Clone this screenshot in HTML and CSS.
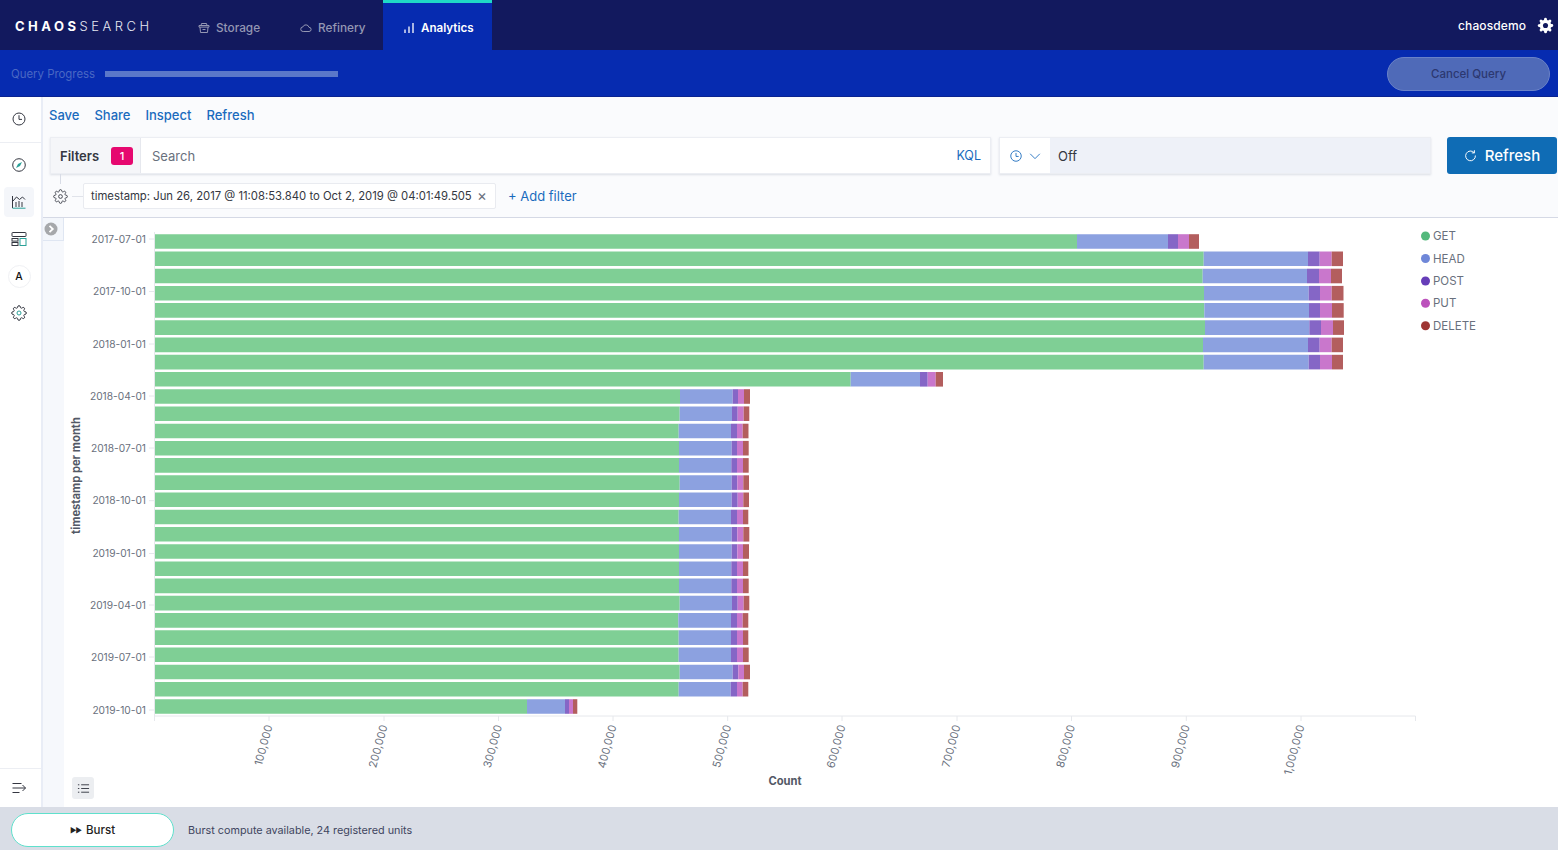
FILE: index.html
```html
<!DOCTYPE html>
<html lang="en">
<head>
<meta charset="utf-8">
<title>CHAOSSEARCH Analytics</title>
<link rel="stylesheet" href="styles.css">
</head>
<body>
<svg class="defs" width="0" height="0" aria-hidden="true">
  <symbol id="gear" viewBox="0 0 24 24"><path d="M19.4 15a1.65 1.65 0 0 0 .33 1.82l.06.06a2 2 0 0 1 0 2.83 2 2 0 0 1-2.83 0l-.06-.06a1.65 1.65 0 0 0-1.82-.33 1.65 1.65 0 0 0-1 1.51V21a2 2 0 0 1-2 2 2 2 0 0 1-2-2v-.09A1.65 1.65 0 0 0 9 19.4a1.65 1.65 0 0 0-1.82.33l-.06.06a2 2 0 0 1-2.83 0 2 2 0 0 1 0-2.83l.06-.06a1.65 1.65 0 0 0 .33-1.82 1.65 1.65 0 0 0-1.51-1H3a2 2 0 0 1-2-2 2 2 0 0 1 2-2h.09A1.65 1.65 0 0 0 4.6 9a1.65 1.65 0 0 0-.33-1.82l-.06-.06a2 2 0 0 1 0-2.83 2 2 0 0 1 2.83 0l.06.06a1.65 1.65 0 0 0 1.82.33H9a1.65 1.65 0 0 0 1-1.51V3a2 2 0 0 1 2-2 2 2 0 0 1 2 2v.09a1.65 1.65 0 0 0 1 1.51 1.65 1.65 0 0 0 1.82-.33l.06-.06a2 2 0 0 1 2.83 0 2 2 0 0 1 0 2.83l-.06.06a1.65 1.65 0 0 0-.33 1.82V9a1.65 1.65 0 0 0 1.51 1H21a2 2 0 0 1 2 2 2 2 0 0 1-2 2h-.09a1.65 1.65 0 0 0-1.51 1z"/></symbol>
</svg>

<header class="topbar">
  <div class="logo"><b>CHAOS</b>SEARCH</div>
  <nav class="nav">
    <a class="nav-item nav-storage">
      <svg class="nav-icon" viewBox="0 0 12 12"><path d="M1 3.5h10v1.6H1zM2 5.1l.5 5.4h7l.5-5.4M3 3.5l.5-2h5l.5 2M4.5 7.5h3"/></svg>
      Storage
    </a>
    <a class="nav-item nav-refinery">
      <svg class="nav-icon" viewBox="0 0 12 12"><path d="M3.2 9.5a2.3 2.3 0 0 1-.3-4.6 3.2 3.2 0 0 1 6.1.4 2.1 2.1 0 0 1 0 4.2z"/></svg>
      Refinery
    </a>
    <a class="nav-item nav-active">
      <svg class="nav-icon" viewBox="0 0 12 12"><path d="M2 11V7.5M6 11V4.5M10 11V1"/></svg>
      Analytics
    </a>
  </nav>
  <div class="user">
    <span>chaosdemo</span>
    <svg class="user-gear" viewBox="0 0 24 24"><use href="#gear"/><circle cx="12" cy="12" r="3.6"/></svg>
  </div>
</header>

<section class="progressbar">
  <span class="progress-label">Query Progress</span>
  <span class="progress-track"></span>
  <button class="cancel">Cancel Query</button>
</section>

<main class="main">
  <aside class="sidebar">
    <div class="side-top">
      <svg class="side-icon" viewBox="0 0 16 16"><circle cx="8" cy="8" r="6"/><path d="M8 4.2V8.4H11"/></svg>
    </div>
    <div class="side-list">
      <span class="side-slot">
        <svg class="side-icon" viewBox="0 0 16 16"><circle cx="8" cy="8" r="6.3"/><path class="teal-fill" d="M11 5 9 9 5 11 7 7z"/></svg>
      </span>
      <span class="side-slot side-active">
        <svg class="side-icon" viewBox="0 0 16 16"><path d="M1.5 2v12"/><path class="teal" d="M1.5 14.2h13"/><path d="M2 7l3.5-4 3 2.5L11.5 3 14 5.5M5 8v5M8 7v6M11 8v5"/></svg>
      </span>
      <span class="side-slot">
        <svg class="side-icon" viewBox="0 0 16 16"><rect x="1" y="1.5" width="14" height="4" rx=".6"/><rect x="1" y="7.5" width="6" height="2.6"/><rect x="1" y="11.5" width="6" height="3"/><rect class="teal" x="9" y="7.5" width="6" height="7"/></svg>
      </span>
      <span class="side-slot"><span class="side-a">A</span></span>
      <span class="side-slot">
        <svg class="side-icon side-gear" viewBox="0 0 24 24"><use href="#gear"/><circle class="teal" cx="12" cy="12" r="3"/></svg>
      </span>
    </div>
    <div class="side-bottom">
      <svg class="side-icon" viewBox="0 0 16 16"><path d="M1.5 3.5h9M1.5 8h13M1.5 12.5h7M11.5 5l3 3-3 3"/></svg>
    </div>
  </aside>

  <div class="content">
    <div class="links">
      <a>Save</a><a>Share</a><a>Inspect</a><a>Refresh</a>
    </div>

    <div class="querybar">
      <div class="search">
        <div class="filters-btn">Filters <span class="badge">1</span></div>
        <div class="search-field">Search</div>
        <a class="kql">KQL</a>
      </div>
      <div class="timebox">
        <div class="time-btn">
          <svg class="time-icon" viewBox="0 0 16 16"><circle cx="8" cy="8" r="6"/><path d="M8 4.5V8.5H11"/></svg>
          <svg class="time-icon" viewBox="0 0 16 16"><path d="M2.5 5.5 8 11l5.5-5.5"/></svg>
        </div>
        <div class="time-value">Off</div>
      </div>
      <button class="refresh">
        <svg class="refresh-icon" viewBox="0 0 16 16"><path d="M12.6 4.6A6 6 0 1 0 14 8M12.8 1.5v3.3H9.6"/></svg>
        Refresh
      </button>
    </div>

    <div class="filterrow">
      <span class="filter-gear">
        <svg class="filter-gear-icon" viewBox="0 0 24 24"><use href="#gear"/><circle cx="12" cy="12" r="3"/></svg>
      </span>
      <span class="filter-dash"></span>
      <span class="pill">timestamp: Jun 26, 2017 @ 11:08:53.840 to Oct 2, 2019 @ 04:01:49.505 <i class="pill-x">×</i></span>
      <a class="addfilter">+ Add filter</a>
    </div>

    <div class="chartwrap">
      <div class="strip">
        <span class="toggle-box">
          <svg class="toggle" viewBox="0 0 14 14"><circle cx="7" cy="7" r="6.5"/><path d="M5.5 3.8 8.8 7l-3.3 3.2"/></svg>
        </span>
      </div>
      <div class="chart">
        <svg class="plot" viewBox="64 218 1494 589">
          <g class="bar" transform="translate(0 241.5)"><line class="g" x1="154.5" x2="1077"/><line class="h" x1="1077" x2="1168"/><line class="p" x1="1168" x2="1178"/><line class="u" x1="1178" x2="1189"/><line class="d" x1="1189" x2="1199"/></g>
          <g class="bar" transform="translate(0 258.8)"><line class="g" x1="154.5" x2="1203.7"/><line class="h" x1="1203.7" x2="1308"/><line class="p" x1="1308" x2="1319.7"/><line class="u" x1="1319.7" x2="1331.7"/><line class="d" x1="1331.7" x2="1343"/></g>
          <g class="bar" transform="translate(0 276)"><line class="g" x1="154.5" x2="1202.7"/><line class="h" x1="1202.7" x2="1307"/><line class="p" x1="1307" x2="1319"/><line class="u" x1="1319" x2="1331"/><line class="d" x1="1331" x2="1342"/></g>
          <g class="bar" transform="translate(0 293.2)"><line class="g" x1="154.5" x2="1204"/><line class="h" x1="1204" x2="1308.7"/><line class="p" x1="1308.7" x2="1320"/><line class="u" x1="1320" x2="1331.7"/><line class="d" x1="1331.7" x2="1343.5"/></g>
          <g class="bar" transform="translate(0 310.4)"><line class="g" x1="154.5" x2="1204.3"/><line class="h" x1="1204.3" x2="1309"/><line class="p" x1="1309" x2="1320"/><line class="u" x1="1320" x2="1332"/><line class="d" x1="1332" x2="1343.7"/></g>
          <g class="bar" transform="translate(0 327.6)"><line class="g" x1="154.5" x2="1205"/><line class="h" x1="1205" x2="1309.3"/><line class="p" x1="1309.3" x2="1321"/><line class="u" x1="1321" x2="1333"/><line class="d" x1="1333" x2="1344"/></g>
          <g class="bar" transform="translate(0 344.9)"><line class="g" x1="154.5" x2="1203"/><line class="h" x1="1203" x2="1308"/><line class="p" x1="1308" x2="1319.7"/><line class="u" x1="1319.7" x2="1331.7"/><line class="d" x1="1331.7" x2="1343"/></g>
          <g class="bar" transform="translate(0 362.1)"><line class="g" x1="154.5" x2="1203.7"/><line class="h" x1="1203.7" x2="1308.7"/><line class="p" x1="1308.7" x2="1320"/><line class="u" x1="1320" x2="1332"/><line class="d" x1="1332" x2="1343"/></g>
          <g class="bar" transform="translate(0 379.3)"><line class="g" x1="154.5" x2="850.7"/><line class="h" x1="850.7" x2="920"/><line class="p" x1="920" x2="927.7"/><line class="u" x1="927.7" x2="935.7"/><line class="d" x1="935.7" x2="943"/></g>
          <g class="bar" transform="translate(0 396.5)"><line class="g" x1="154.5" x2="680"/><line class="h" x1="680" x2="732.7"/><line class="p" x1="732.7" x2="738"/><line class="u" x1="738" x2="744"/><line class="d" x1="744" x2="750"/></g>
          <g class="bar" transform="translate(0 413.7)"><line class="g" x1="154.5" x2="679.7"/><line class="h" x1="679.7" x2="732"/><line class="p" x1="732" x2="737.7"/><line class="u" x1="737.7" x2="743.7"/><line class="d" x1="743.7" x2="749.3"/></g>
          <g class="bar" transform="translate(0 431)"><line class="g" x1="154.5" x2="678.7"/><line class="h" x1="678.7" x2="731"/><line class="p" x1="731" x2="737"/><line class="u" x1="737" x2="742.7"/><line class="d" x1="742.7" x2="748.5"/></g>
          <g class="bar" transform="translate(0 448.2)"><line class="g" x1="154.5" x2="679"/><line class="h" x1="679" x2="731.7"/><line class="p" x1="731.7" x2="737"/><line class="u" x1="737" x2="743"/><line class="d" x1="743" x2="748.7"/></g>
          <g class="bar" transform="translate(0 465.4)"><line class="g" x1="154.5" x2="679"/><line class="h" x1="679" x2="731.3"/><line class="p" x1="731.3" x2="737"/><line class="u" x1="737" x2="743"/><line class="d" x1="743" x2="748.7"/></g>
          <g class="bar" transform="translate(0 482.6)"><line class="g" x1="154.5" x2="679.7"/><line class="h" x1="679.7" x2="731.7"/><line class="p" x1="731.7" x2="737.3"/><line class="u" x1="737.3" x2="743.3"/><line class="d" x1="743.3" x2="749"/></g>
          <g class="bar" transform="translate(0 499.8)"><line class="g" x1="154.5" x2="679"/><line class="h" x1="679" x2="731.7"/><line class="p" x1="731.7" x2="737.7"/><line class="u" x1="737.7" x2="743.3"/><line class="d" x1="743.3" x2="749"/></g>
          <g class="bar" transform="translate(0 517)"><line class="g" x1="154.5" x2="678.7"/><line class="h" x1="678.7" x2="731"/><line class="p" x1="731" x2="737"/><line class="u" x1="737" x2="743"/><line class="d" x1="743" x2="748.3"/></g>
          <g class="bar" transform="translate(0 534.3)"><line class="g" x1="154.5" x2="679"/><line class="h" x1="679" x2="731.7"/><line class="p" x1="731.7" x2="737.3"/><line class="u" x1="737.3" x2="743.3"/><line class="d" x1="743.3" x2="749.3"/></g>
          <g class="bar" transform="translate(0 551.5)"><line class="g" x1="154.5" x2="679"/><line class="h" x1="679" x2="731.7"/><line class="p" x1="731.7" x2="737.3"/><line class="u" x1="737.3" x2="743"/><line class="d" x1="743" x2="749"/></g>
          <g class="bar" transform="translate(0 568.7)"><line class="g" x1="154.5" x2="679"/><line class="h" x1="679" x2="731.3"/><line class="p" x1="731.3" x2="737"/><line class="u" x1="737" x2="743"/><line class="d" x1="743" x2="748.3"/></g>
          <g class="bar" transform="translate(0 585.9)"><line class="g" x1="154.5" x2="679"/><line class="h" x1="679" x2="731.3"/><line class="p" x1="731.3" x2="737"/><line class="u" x1="737" x2="743"/><line class="d" x1="743" x2="748.7"/></g>
          <g class="bar" transform="translate(0 603.1)"><line class="g" x1="154.5" x2="679.7"/><line class="h" x1="679.7" x2="732"/><line class="p" x1="732" x2="737.7"/><line class="u" x1="737.7" x2="743.7"/><line class="d" x1="743.7" x2="749.3"/></g>
          <g class="bar" transform="translate(0 620.4)"><line class="g" x1="154.5" x2="678.3"/><line class="h" x1="678.3" x2="731"/><line class="p" x1="731" x2="737"/><line class="u" x1="737" x2="742.7"/><line class="d" x1="742.7" x2="748.3"/></g>
          <g class="bar" transform="translate(0 637.6)"><line class="g" x1="154.5" x2="678.7"/><line class="h" x1="678.7" x2="731"/><line class="p" x1="731" x2="737"/><line class="u" x1="737" x2="743"/><line class="d" x1="743" x2="748.3"/></g>
          <g class="bar" transform="translate(0 654.8)"><line class="g" x1="154.5" x2="678.7"/><line class="h" x1="678.7" x2="731"/><line class="p" x1="731" x2="737"/><line class="u" x1="737" x2="743"/><line class="d" x1="743" x2="748.7"/></g>
          <g class="bar" transform="translate(0 672)"><line class="g" x1="154.5" x2="679.7"/><line class="h" x1="679.7" x2="732.7"/><line class="p" x1="732.7" x2="738.3"/><line class="u" x1="738.3" x2="744"/><line class="d" x1="744" x2="750"/></g>
          <g class="bar" transform="translate(0 689.2)"><line class="g" x1="154.5" x2="678.7"/><line class="h" x1="678.7" x2="730.7"/><line class="p" x1="730.7" x2="737"/><line class="u" x1="737" x2="742.7"/><line class="d" x1="742.7" x2="748.3"/></g>
          <g class="bar" transform="translate(0 706.5)"><line class="g" x1="154.5" x2="527"/><line class="h" x1="527" x2="565"/><line class="p" x1="565" x2="569"/><line class="u" x1="569" x2="573"/><line class="d" x1="573" x2="577.3"/></g>

          <path class="axis" d="M154.5 716H1415.5M154.5 716V721M269 716V721M384 716V721M498.5 716V721M613 716V721M727.7 716V721M842 716V721M957 716V721M1071.5 716V721M1186.3 716V721M1301 716V721M1415.5 716V721M154.5 232V716M149 239H154.5M149 291.5H154.5M149 344H154.5M149 396H154.5M149 448H154.5M149 500.7H154.5M149 553.5H154.5M149 605H154.5M149 657H154.5M149 710H154.5"/>

          <g class="ylabels">
            <text x="146" y="242.7">2017-07-01</text>
            <text x="146" y="295.2">2017-10-01</text>
            <text x="146" y="347.7">2018-01-01</text>
            <text x="146" y="399.7">2018-04-01</text>
            <text x="146" y="451.7">2018-07-01</text>
            <text x="146" y="504.4">2018-10-01</text>
            <text x="146" y="557.2">2019-01-01</text>
            <text x="146" y="608.7">2019-04-01</text>
            <text x="146" y="660.7">2019-07-01</text>
            <text x="146" y="713.7">2019-10-01</text>
          </g>
          <g class="xlabels">
            <text transform="translate(272.5 726) rotate(-75)">100,000</text>
            <text transform="translate(387.5 726) rotate(-75)">200,000</text>
            <text transform="translate(502 726) rotate(-75)">300,000</text>
            <text transform="translate(616.5 726) rotate(-75)">400,000</text>
            <text transform="translate(731.2 726) rotate(-75)">500,000</text>
            <text transform="translate(845.5 726) rotate(-75)">600,000</text>
            <text transform="translate(960.5 726) rotate(-75)">700,000</text>
            <text transform="translate(1075 726) rotate(-75)">800,000</text>
            <text transform="translate(1189.8 726) rotate(-75)">900,000</text>
            <text transform="translate(1304.5 726) rotate(-75)">1,000,000</text>
          </g>
          <text class="axis-title" transform="translate(79.5 475.5) rotate(-90)">timestamp per month</text>
          <text class="axis-title" x="785" y="785">Count</text>

          <g class="legend">
            <circle class="lg" cx="1425.5" cy="236" r="4.5"/><text x="1433" y="240">GET</text>
            <circle class="lh" cx="1425.5" cy="258.5" r="4.5"/><text x="1433" y="262.5">HEAD</text>
            <circle class="lp" cx="1425.5" cy="281" r="4.5"/><text x="1433" y="285">POST</text>
            <circle class="lu" cx="1425.5" cy="303.3" r="4.5"/><text x="1433" y="307.3">PUT</text>
            <circle class="ld" cx="1425.5" cy="325.7" r="4.5"/><text x="1433" y="329.7">DELETE</text>
          </g>
        </svg>
        <button class="listbtn">
          <svg class="list-icon" viewBox="0 0 14 14"><path d="M4.5 3H13M4.5 7H13M4.5 11H13M1 3h1.5M1 7h1.5M1 11h1.5"/></svg>
        </button>
      </div>
    </div>
  </div>
</main>

<footer class="footer">
  <button class="burst"><span class="burst-icon">▶▶</span> Burst</button>
  <span class="burst-text">Burst compute available, 24 registered units</span>
</footer>
</body>
</html>
```
FILE: styles.css
```css
* { box-sizing: border-box; }
html, body { margin: 0; padding: 0; height: 100%; }
body {
  width: 1558px;
  height: 850px;
  overflow: hidden;
  display: flex;
  flex-direction: column;
  font-family: "Inter", "Liberation Sans", sans-serif;
  background: #fff;
  color: #343741;
}
.defs { position: absolute; }
a { text-decoration: none; }
button { font-family: inherit; }

/* top bar */
.topbar {
  height: 50px;
  flex: none;
  display: flex;
  align-items: stretch;
  background: #12195e;
  color: #fff;
}
.logo {
  width: 198px;
  padding: 19px 0 0 15px;
  font-size: 13px;
  line-height: 14px;
  letter-spacing: 3.5px;
  font-weight: 300;
  color: #e6e8f2;
  white-space: nowrap;
}
.logo b { font-weight: 700; color: #fff; }
.nav { display: flex; align-items: stretch; }
.nav-item {
  display: flex;
  align-items: center;
  gap: 6px;
  padding-top: 5px;
  font-size: 11.8px;
  font-weight: 500;
  color: #9497b3;
}
.nav-storage { width: 102px; }
.nav-refinery { width: 83px; }
.nav-active {
  width: 109px;
  padding-left: 20px;
  padding-top: 2px;
  border-top: 3px solid #1fd9c6;
  background: #062bb0;
  color: #fff;
  font-size: 11.6px;
  font-weight: 600;
}
.nav-icon {
  width: 12px;
  height: 12px;
  fill: none;
  stroke: currentColor;
  stroke-width: 1;
}
.nav-active .nav-icon { stroke-width: 1.3; }
.user {
  margin-left: auto;
  display: flex;
  align-items: center;
  gap: 11px;
  padding: 0 4px 0 0;
  font-size: 12px;
  font-weight: 500;
  letter-spacing: .1px;
}
.user-gear { width: 17px; height: 17px; fill: #fff; }
.user-gear circle { fill: #12195e; }

/* progress bar */
.progressbar {
  height: 47px;
  flex: none;
  display: flex;
  align-items: center;
  padding: 1px 8px 0 11px;
  background: #062bb0;
  border-bottom: 1px solid #0a2390;
}
.progress-label { width: 94px; font-size: 11.4px; color: #4a68c4; }
.progress-track { width: 233px; height: 6px; background: #5a77c9; }
.cancel {
  margin-left: auto;
  width: 163px;
  height: 34px;
  border: 1px solid #6a82c8;
  border-radius: 17px;
  background: #4f6ab8;
  color: #2c3870;
  font-size: 11.5px;
  font-weight: 500;
}

/* main */
.main { flex: 1; min-height: 0; display: flex; }
.sidebar {
  width: 43px;
  flex: none;
  display: flex;
  flex-direction: column;
  background: #fff;
  border-right: 2px solid #e9edf6;
}
.side-top {
  height: 46px;
  display: flex;
  align-items: center;
  justify-content: center;
  padding: 0 3px 2px 0;
  border-bottom: 1px solid #eceef3;
}
.side-list {
  flex: 1;
  display: flex;
  flex-direction: column;
  align-items: center;
  padding: 7px 3px 0 0;
  gap: 7px;
}
.side-slot {
  width: 30px;
  height: 30px;
  display: flex;
  align-items: center;
  justify-content: center;
  border-radius: 4px;
}
.side-active { background: #f4f6fa; }
.side-icon {
  width: 16px;
  height: 16px;
  fill: none;
  stroke: #343741;
  stroke-width: 1;
}
.side-gear { stroke-width: 1.5; }
.side-icon .teal { stroke: #2aa198; }
.side-icon .teal-fill { fill: #2aa198; stroke: none; }
.side-a {
  width: 23px;
  height: 23px;
  display: flex;
  align-items: center;
  justify-content: center;
  border: 1px solid #f0f1f4;
  border-radius: 50%;
  font-size: 10.5px;
  font-weight: 500;
  color: #111;
}
.side-bottom {
  height: 39px;
  display: flex;
  align-items: center;
  justify-content: center;
  padding-right: 3px;
  border-top: 1px solid #eceef3;
}

/* content */
.content {
  flex: 1;
  min-width: 0;
  display: flex;
  flex-direction: column;
  background: #fafbfd;
}
.links {
  height: 40px;
  flex: none;
  display: flex;
  align-items: center;
  gap: 15px;
  padding: 0 0 4px 6px;
  font-size: 13px;
  font-weight: 500;
}
.links a { color: #1a6bbd; }
.querybar {
  height: 38px;
  flex: none;
  display: flex;
  align-items: flex-start;
  padding: 0 1px 0 7px;
}
.search {
  width: 941px;
  height: 37px;
  display: flex;
  align-items: center;
  background: #fff;
  border: 1px solid #eceef3;
  box-shadow: 0 1px 2px rgba(90, 100, 130, .18);
  font-size: 13px;
}
.filters-btn {
  width: 90px;
  height: 100%;
  flex: none;
  display: flex;
  align-items: center;
  justify-content: space-between;
  padding: 0 7px 0 9px;
  background: #f5f6f9;
  border-right: 1px solid #e6e8ee;
  font-weight: 600;
  color: #343741;
}
.badge {
  width: 22px;
  height: 18px;
  display: flex;
  align-items: center;
  justify-content: center;
  border-radius: 3px;
  background: #e6086f;
  color: #fff;
  font-size: 11px;
  font-weight: 500;
}
.search-field { flex: 1; padding-left: 11px; color: #69707d; }
.kql { padding-right: 9px; font-size: 12.5px; font-weight: 400; color: #1a6bbd; }
.timebox {
  width: 432px;
  height: 37px;
  margin-left: 8px;
  display: flex;
  align-items: stretch;
  border: 1px solid #eceef3;
  box-shadow: 0 1px 2px rgba(90, 100, 130, .18);
}
.time-btn {
  width: 50px;
  flex: none;
  display: flex;
  align-items: center;
  justify-content: center;
  gap: 5px;
  background: #fff;
}
.time-icon {
  width: 14px;
  height: 14px;
  fill: none;
  stroke: #1a6bbd;
  stroke-width: 1;
}
.time-value {
  flex: 1;
  display: flex;
  align-items: center;
  padding-left: 8px;
  background: #eef1f8;
  font-size: 13px;
  color: #343741;
}
.refresh {
  width: 110px;
  height: 37px;
  margin-left: 16px;
  display: flex;
  align-items: center;
  justify-content: center;
  gap: 8px;
  border: 0;
  border-radius: 3px;
  background: #0f6cb5;
  color: #fff;
  font-size: 15px;
  font-weight: 500;
}
.refresh-icon {
  width: 13px;
  height: 13px;
  fill: none;
  stroke: #fff;
  stroke-width: 1.2;
}
.filterrow {
  height: 43px;
  flex: none;
  display: flex;
  align-items: center;
  padding: 0 0 0 9px;
  border-bottom: 1px solid #d5d9e5;
}
.filter-gear {
  position: relative;
  width: 17px;
  height: 17px;
  display: flex;
}
.filter-gear::before {
  content: "";
  position: absolute;
  left: 8px;
  top: -14px;
  height: 10px;
  border-left: 1px solid #d8dce6;
}
.filter-gear-icon {
  width: 15px;
  height: 15px;
  margin: 1px;
  fill: none;
  stroke: #343741;
  stroke-width: 1.4;
}
.filter-dash { width: 11px; margin-left: 3px; border-top: 1px solid #e0e3ea; }
.pill {
  width: 413px;
  height: 26px;
  display: flex;
  align-items: center;
  justify-content: space-between;
  padding: 0 8px 0 7px;
  background: #fff;
  border: 1px solid #e9ebf0;
  border-radius: 2px;
  font-size: 11.3px;
  color: #343741;
  white-space: nowrap;
}
.pill-x { font-style: normal; font-size: 15px; line-height: 12px; color: #69707d; }
.addfilter { margin-left: 12px; font-size: 13px; color: #1a6bbd; }

/* chart */
.chartwrap { flex: 1; min-height: 0; display: flex; }
.strip {
  width: 21px;
  flex: none;
  background: #f6f8fc;
}
.toggle-box {
  display: flex;
  align-items: center;
  justify-content: center;
  width: 21px;
  height: 23px;
  padding-right: 4px;
  background: #f3f6fb;
  border-right: 1px solid #dfe6f2;
  border-bottom: 1px solid #dfe6f2;
}
.toggle { width: 14px; height: 14px; }
.toggle circle { fill: #a6a8ab; }
.toggle path { fill: none; stroke: #fff; stroke-width: 1.8; }
.chart { position: relative; flex: 1; min-width: 0; background: #fff; }
.plot { display: block; width: 100%; height: 100%; }
.bar line { stroke-width: 14.6; }
.bar .g { stroke: #7fcf95; }
.bar .h { stroke: #8ca1e0; }
.bar .p { stroke: #8566c6; }
.bar .u { stroke: #c977cc; }
.bar .d { stroke: #b35e5e; }
.axis { fill: none; stroke: #e6e8ec; stroke-width: 1; }
.ylabels text {
  font-size: 10.2px;
  text-anchor: end;
  fill: #69707d;
}
.xlabels text {
  font-size: 11px;
  text-anchor: end;
  fill: #69707d;
}
.axis-title {
  font-size: 11.2px;
  font-weight: 700;
  text-anchor: middle;
  fill: #535966;
}
.legend text { font-size: 11.5px; fill: #69707d; }
.lg { fill: #54b97c; }
.lh { fill: #6f87d8; }
.lp { fill: #663db8; }
.lu { fill: #bc52bc; }
.ld { fill: #9e3533; }
.listbtn {
  position: absolute;
  left: 8px;
  bottom: 8px;
  width: 22px;
  height: 22px;
  padding: 0;
  display: flex;
  align-items: center;
  justify-content: center;
  border: 0;
  border-radius: 3px;
  background: #eceef1;
}
.list-icon {
  width: 13px;
  height: 13px;
  fill: none;
  stroke: #343741;
  stroke-width: 1;
}

/* footer */
.footer {
  height: 43px;
  flex: none;
  display: flex;
  align-items: center;
  padding: 3px 0 0 11px;
  background: #d9dde6;
}
.burst {
  width: 163px;
  height: 34px;
  border: 1px solid #5fe0cc;
  border-radius: 17px;
  background: #fff;
  color: #222;
  font-size: 11.5px;
  font-weight: 500;
}
.burst-icon { font-size: 7px; letter-spacing: -1px; margin-right: 2px; vertical-align: 1px; }
.burst-text { margin-left: 14px; font-size: 10.8px; color: #3f4560; }
```
